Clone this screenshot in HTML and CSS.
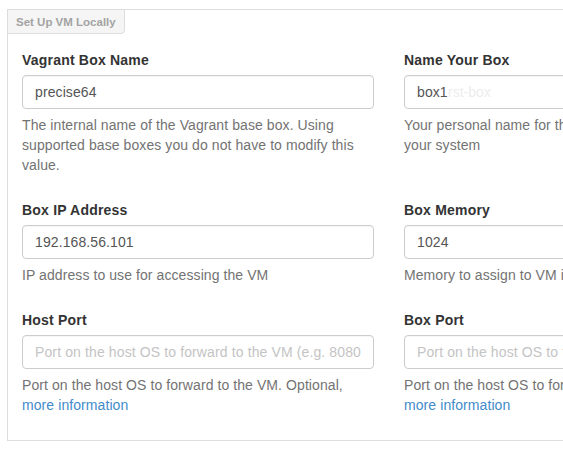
FILE: index.html
```html
<!DOCTYPE html>
<html lang="en">
<head>
<meta charset="utf-8">
<title>Set Up VM Locally</title>
<link rel="stylesheet" href="styles.css">
</head>
<body>
<div class="panel">
  <div class="tab">Set Up VM Locally</div>
  <div class="grid">
    <div class="group">
      <label class="label">Vagrant Box Name</label>
      <div class="field"><input class="input" type="text" value="precise64"></div>
      <p class="help">The internal name of the Vagrant base box. Using supported base boxes you do not have to modify this value.</p>
    </div>
    <div class="group">
      <label class="label">Name Your Box</label>
      <div class="field"><input class="input" type="text" value="box1"><span class="ghost">rst-box</span></div>
      <p class="help">Your personal name for the box to identify it on<br>your system</p>
    </div>
    <div class="group">
      <label class="label">Box IP Address</label>
      <div class="field"><input class="input" type="text" value="192.168.56.101"></div>
      <p class="help">IP address to use for accessing the VM</p>
    </div>
    <div class="group">
      <label class="label">Box Memory</label>
      <div class="field"><input class="input" type="text" value="1024"></div>
      <p class="help">Memory to assign to VM in MB</p>
    </div>
    <div class="group">
      <label class="label">Host Port</label>
      <div class="field"><input class="input" type="text" placeholder="Port on the host OS to forward to the VM (e.g. 8080)"></div>
      <p class="help">Port on the host OS to forward to the VM. Optional, <a class="link" href="#">more information</a></p>
    </div>
    <div class="group">
      <label class="label">Box Port</label>
      <div class="field"><input class="input" type="text" placeholder="Port on the host OS to forward to the VM (e.g. 8080)"></div>
      <p class="help">Port on the host OS to forward to the VM. Optional,<br><a class="link" href="#">more information</a></p>
    </div>
  </div>
</div>
</body>
</html>
```
FILE: styles.css
```css
html, body {
  margin: 0;
  padding: 0;
  overflow: hidden;
  background: #fff;
}
body {
  font-family: "Liberation Sans", Arial, Helvetica, sans-serif;
  font-size: 14px;
  line-height: 20px;
  color: #333;
  padding: 9px 0 0 7px;
}
.panel {
  width: 800px;
  border: 1px solid #ddd;
  box-sizing: border-box;
}
.tab {
  width: max-content;
  margin: -1px 0 0 -1px;
  padding: 4px 8px 3px 8px;
  border: 1px solid #ddd;
  border-radius: 0 0 4px 0;
  background: #f5f5f5;
  color: #a3a3a3;
  font-size: 11.5px;
  font-weight: bold;
  line-height: 16px;
}
.grid {
  display: grid;
  grid-template-columns: 352px 352px;
  column-gap: 30px;
  padding: 16px 14px 0 14px;
}
.group {
  display: flex;
  flex-direction: column;
  align-items: flex-start;
  margin-bottom: 25px;
}
.label {
  font-weight: bold;
  margin-bottom: 5px;
  line-height: 20px;
  letter-spacing: 0.2px;
}
.field {
  position: relative;
  box-sizing: border-box;
  width: 100%;
  height: 34px;
  padding: 0 12px;
  border: 1px solid #ccc;
  border-radius: 4px;
  background: #fff;
  box-shadow: inset 0 1px 1px rgba(0,0,0,0.04);
}
.input {
  display: block;
  box-sizing: border-box;
  width: 100%;
  height: 32px;
  margin: 0;
  padding: 6px 0;
  border: 0;
  outline: none;
  font-family: inherit;
  font-size: 14px;
  line-height: 20px;
  color: #555;
  background: transparent;
  letter-spacing: 0.1px;
  clip-path: inset(0);
}
.input::placeholder {
  color: #c4c4c4;
  opacity: 1;
  letter-spacing: 0.12px;
}
.ghost {
  position: absolute;
  left: 43px;
  top: 6px;
  color: #ededed;
  pointer-events: none;
}
.help {
  margin: 6px 0 0 0;
  color: #737373;
  letter-spacing: 0.08px;
}
.link {
  color: #428bca;
  text-decoration: none;
}
```
